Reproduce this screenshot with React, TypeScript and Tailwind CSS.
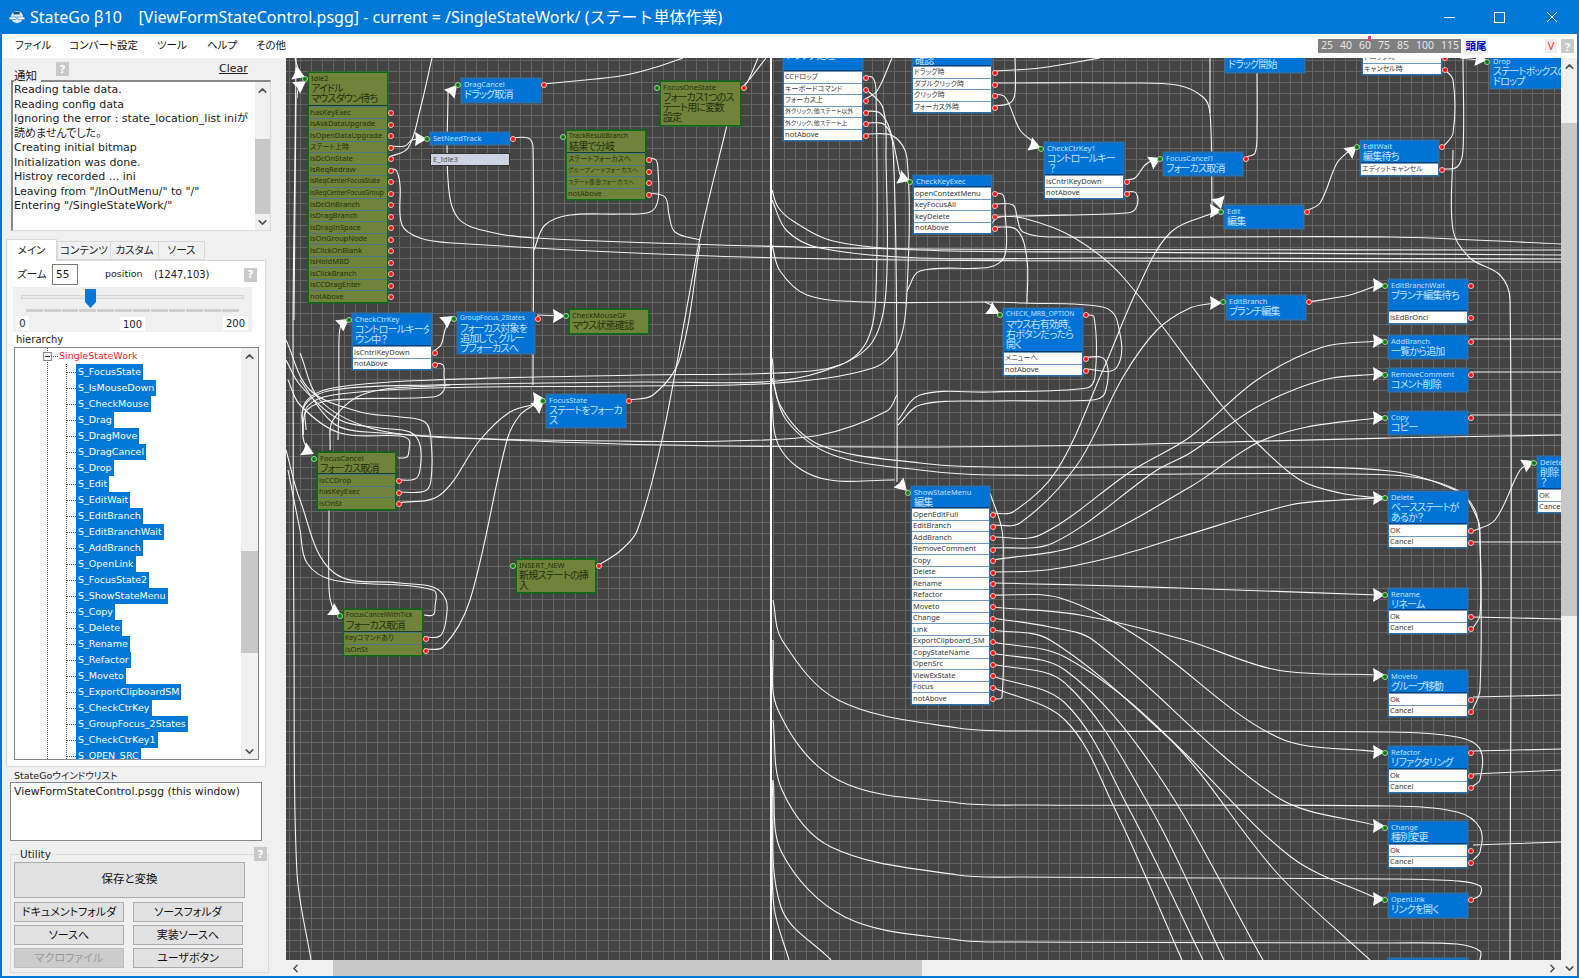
import { ChevronUp, ChevronDown, ChevronLeft, ChevronRight } from "lucide-react";

type NodeData = {
  x: number; y: number; w: number; h: number; c: "g" | "b";
  name: string; title?: string; rows?: string[]; out?: boolean;
};

const RH = 11.5;

const nodes: NodeData[] = [
  { x: 308, y: 72, w: 79, h: 34, c: "g", name: "Idle2", title: "アイドル\nマウスダウン待ち", rows: ["hasKeyExec", "isAskDataUpgrade", "isOpenDataUpgrade", "ステート上時", "isDcOnState", "isReqRedraw", "isReqCenterFocusState", "isReqCenterFocusGroup", "isDcOnBranch", "isDragBranch", "isDragInSpace", "isOnGroupNode", "isClickOnBlank", "isHoldMBD", "isClickBranch", "isCCDragEnter", "notAbove"] },
  { x: 660, y: 81, w: 80, h: 44, c: "g", name: "FocusOneState", title: "フォーカス1つのス\nテート用に変数\n設定", out: true },
  { x: 566, y: 130, w: 79, h: 23, c: "g", name: "TrackResultBranch", title: "結果で分岐", rows: ["ステートフォーカスへ", "グループノードフォーカスへ", "ステート集合フォーカスへ", "notAbove"] },
  { x: 569, y: 309, w: 79, h: 24, c: "g", name: "CheckMouseGF", title: "マウス状態確認" },
  { x: 317, y: 452, w: 78, h: 22, c: "g", name: "FocusCancel", title: "フォーカス取消", rows: ["isCCDrop", "hasKeyExec", "isOnSt"] },
  { x: 343, y: 609, w: 79, h: 23, c: "g", name: "FocusCancelWithTick", title: "フォーカス取消", rows: ["Keyコマンドあり", "isOnSt"] },
  { x: 516, y: 559, w: 79, h: 33, c: "g", name: "INSERT_NEW", title: "新規ステートの挿\n入", out: true },
  { x: 461, y: 78, w: 79, h: 24, c: "b", name: "DragCancel", title: "ドラッグ取消", out: true },
  { x: 430, y: 132, w: 79, h: 12, c: "b", name: "SetNeedTrack", out: true },
  { x: 352, y: 313, w: 79, h: 33, c: "b", name: "CheckCtrKey", title: "コントロールキーダ\nウン中？", rows: ["isCntrlKeyDown", "notAbove"] },
  { x: 457, y: 312, w: 77, h: 41, c: "b", name: "GroupFocus_2States", title: "フォーカス対象を\n追加して、グルー\nプフォーカスへ", out: true },
  { x: 546, y: 394, w: 79, h: 33, c: "b", name: "FocusState", title: "ステートをフォーカ\nス", out: true },
  { x: 783, y: 29, w: 79, h: 42, c: "b", name: "IsMouseDown", title: "マウスボタン\nドラッグ処理", rows: ["CCドロップ", "キーボードコマンド", "フォーカス上", "外クリック、他ステート以外", "外クリック、他ステート上", "notAbove"] },
  { x: 912, y: 34, w: 79, h: 32, c: "b", name: "CheckMouse", title: "マウスを\n確認", rows: ["ドラッグ時", "ダブルクリック時", "クリック時", "フォーカス外時"] },
  { x: 913, y: 175, w: 78, h: 12, c: "b", name: "CheckKeyExec", rows: ["openContextMenu", "keyFocusAll", "keyDelete", "notAbove"] },
  { x: 1044, y: 142, w: 79, h: 33, c: "b", name: "CheckCtrKey1", title: "コントロールキー\n ？", rows: ["isCntrlKeyDown", "notAbove"] },
  { x: 1163, y: 152, w: 79, h: 23, c: "b", name: "FocusCancel1", title: "フォーカス取消", out: true },
  { x: 1224, y: 205, w: 79, h: 23, c: "b", name: "Edit", title: "編集", out: true },
  { x: 1225, y: 48, w: 79, h: 24, c: "b", name: "Drag", title: "ドラッグ開始" },
  { x: 1360, y: 140, w: 78, h: 23, c: "b", name: "EditWait", title: "編集待ち", rows: ["エディットキャンセル"], out: true },
  { x: 1362, y: 46, w: 79, h: 5, c: "b", name: "", rows: ["ドロップ時", "キャンセル時"] },
  { x: 1490, y: 55, w: 80, h: 33, c: "b", name: "Drop", title: "ステートボックスの\nドロップ" },
  { x: 1226, y: 295, w: 79, h: 24, c: "b", name: "EditBranch", title: "ブランチ編集", out: true },
  { x: 1388, y: 279, w: 79, h: 32, c: "b", name: "EditBranchWait", title: "ブランチ編集待ち", rows: ["isEdBrOncl"], out: true },
  { x: 1388, y: 335, w: 79, h: 23, c: "b", name: "AddBranch", title: "一覧から追加", out: true },
  { x: 1388, y: 368, w: 79, h: 23, c: "b", name: "RemoveComment", title: "コメント削除", out: true },
  { x: 1388, y: 411, w: 79, h: 23, c: "b", name: "Copy", title: "コピー", out: true },
  { x: 1003, y: 308, w: 79, h: 44, c: "b", name: "CHECK_MRB_OPTION", title: "マウス右有効時、\n右ボタンだったら\n開く", rows: ["メニューへ", "notAbove"], out: true },
  { x: 911, y: 486, w: 78, h: 22, c: "b", name: "ShowStateMenu", title: "編集", rows: ["OpenEditFull", "EditBranch", "AddBranch", "RemoveComment", "Copy", "Delete", "Rename", "Refactor", "Moveto", "Change", "Link", "ExportClipboard_SM", "CopyStateName", "OpenSrc", "ViewExState", "Focus", "notAbove"] },
  { x: 1388, y: 491, w: 79, h: 33, c: "b", name: "Delete", title: "ベースステートが\nあるか？", rows: ["OK", "Cancel"] },
  { x: 1388, y: 588, w: 79, h: 22, c: "b", name: "Rename", title: "リネーム", rows: ["Ok", "Cancel"] },
  { x: 1388, y: 670, w: 79, h: 23, c: "b", name: "Moveto", title: "グループ移動", rows: ["Ok", "Cancel"] },
  { x: 1388, y: 746, w: 79, h: 23, c: "b", name: "Refactor", title: "リファクタリング", rows: ["Ok", "Cancel"], out: true },
  { x: 1388, y: 821, w: 79, h: 23, c: "b", name: "Change", title: "種別変更", rows: ["Ok", "Cancel"] },
  { x: 1388, y: 893, w: 79, h: 24, c: "b", name: "OpenLink", title: "リンクを開く", out: true },
  { x: 1388, y: 958, w: 79, h: 24, c: "b", name: "Focus", title: "フォーカス" },
  { x: 1537, y: 456, w: 79, h: 33, c: "b", name: "Delete2", title: "削除\n？", rows: ["OK", "Cancel"] },
];

const wires: number[][] = [
  [296, 58, 295, 155, 293, 325, 294, 640, 297, 873, 311, 960],
  [295, 58, 298, 68, 303, 76],
  [297, 98, 298, 90, 304, 82],
  [296, 98, 295, 200, 294, 320],
  [389, 146, 405, 146, 412, 140, 425, 139],
  [389, 157, 408, 148, 420, 110, 432, 58],
  [389, 169, 396, 170, 400, 185, 402, 225, 420, 238, 452, 243, 685, 255, 903, 260, 1561, 262],
  [448, 92, 448, 180, 458, 218, 490, 232, 535, 238, 685, 244, 920, 249, 1561, 250],
  [544, 84, 620, 76, 653, 68, 683, 58],
  [512, 138, 528, 138, 533, 146, 533, 385],
  [649, 158, 656, 160, 658, 170, 658, 200, 650, 212, 620, 214, 570, 215, 545, 225, 534, 250],
  [649, 193, 665, 197, 669, 215, 675, 232, 700, 240],
  [537, 315, 560, 316],
  [347, 320, 341, 325, 339, 340, 339, 400, 338, 440],
  [434, 351, 441, 345, 445, 330, 450, 318],
  [434, 363, 443, 365, 444, 375, 444, 390, 433, 397, 333, 400, 307, 410, 303, 430, 304, 442, 311, 453],
  [303, 435, 305, 403, 333, 388, 433, 380, 640, 375, 777, 373, 840, 365, 867, 341, 876, 291, 876, 91, 873, 78, 865, 76],
  [303, 435, 305, 405, 333, 390, 433, 385, 640, 382, 777, 381, 840, 365, 873, 341, 886, 291, 886, 158, 883, 108, 865, 88],
  [306, 430, 307, 407, 333, 395, 433, 388, 620, 386, 777, 383, 873, 368, 898, 345, 907, 291, 907, 158, 893, 136, 865, 134],
  [994, 193, 1003, 195, 1005, 210, 1005, 255, 990, 267, 920, 271, 907, 291],
  [330, 450, 333, 420, 367, 393, 450, 385],
  [300, 353, 320, 400, 367, 427, 433, 437, 620, 441, 727, 441, 820, 435, 887, 411, 897, 395],
  [300, 380, 333, 423, 367, 432, 620, 444, 900, 447, 1100, 445, 1390, 438, 1561, 435],
  [398, 458, 407, 457, 409, 450, 409, 440, 400, 436, 340, 433, 300, 405, 288, 380],
  [398, 480, 415, 479, 420, 470, 420, 445, 410, 432, 380, 428, 340, 420, 300, 385, 286, 360],
  [398, 492, 425, 491, 431, 480, 431, 440, 425, 422, 400, 417, 360, 412, 310, 390, 286, 340],
  [398, 503, 440, 495, 480, 440, 510, 412, 540, 403],
  [329, 510, 329, 590, 332, 606, 337, 612],
  [424, 615, 433, 615, 435, 608, 433, 590, 333, 580, 307, 563, 300, 530, 288, 470],
  [424, 637, 440, 636, 446, 620, 446, 600, 433, 587, 400, 583, 333, 572, 300, 500, 286, 450],
  [424, 649, 443, 647, 470, 600, 507, 440, 520, 415, 537, 403],
  [599, 565, 620, 551, 637, 531, 663, 435, 700, 238, 727, 125],
  [627, 400, 653, 395, 680, 358, 700, 245],
  [743, 87, 748, 81, 758, 58],
  [743, 87, 753, 75, 766, 58],
  [772, 190, 778, 207, 793, 221, 833, 241, 920, 250, 1100, 252, 1561, 255],
  [772, 200, 787, 231, 820, 248, 920, 258, 1100, 258, 1561, 259],
  [772, 245, 780, 271, 807, 295, 867, 302, 990, 302, 1023, 303, 1103, 307, 1117, 320, 1117, 367, 1084, 369],
  [985, 302, 993, 306, 999, 313],
  [772, 358, 780, 405, 820, 445, 920, 463, 990, 467, 1223, 467, 1390, 471, 1457, 491, 1475, 510, 1480, 540, 1480, 690, 1473, 709],
  [772, 378, 787, 421, 833, 455, 920, 470, 990, 475, 1390, 475, 1457, 490, 1478, 520, 1480, 540, 1480, 615, 1473, 628],
  [771, 391, 780, 448, 820, 478, 895, 480],
  [865, 99, 877, 91, 892, 58],
  [865, 111, 880, 113, 890, 130, 900, 175],
  [865, 123, 885, 125, 893, 148, 897, 358, 897, 482],
  [994, 204, 1013, 205, 1017, 217, 1023, 232, 1057, 237, 1390, 237, 1561, 244],
  [994, 216, 1023, 218, 1073, 237, 1123, 277, 1223, 407, 1257, 443, 1300, 480, 1340, 493, 1378, 498],
  [994, 227, 1017, 230, 1027, 260, 1027, 303],
  [1125, 192, 1136, 193, 1136, 208, 1127, 213, 1023, 216, 997, 218, 990, 227],
  [1125, 180, 1135, 178, 1145, 165, 1155, 159],
  [1246, 157, 1255, 153, 1257, 127, 1257, 72],
  [993, 83, 1123, 83, 1177, 85, 1203, 97, 1210, 113, 1212, 205],
  [1210, 58, 1210, 113],
  [993, 71, 1040, 68, 1100, 58],
  [993, 94, 1005, 97, 1020, 130, 1035, 143],
  [993, 106, 1010, 103, 1015, 93, 1015, 58],
  [1306, 211, 1320, 203, 1337, 163, 1350, 150],
  [992, 513, 1013, 512, 1057, 470, 1103, 370, 1137, 290, 1170, 233, 1215, 212],
  [992, 525, 1020, 523, 1077, 465, 1123, 377, 1157, 330, 1190, 308, 1215, 303],
  [1308, 302, 1350, 295, 1378, 285],
  [992, 537, 1040, 535, 1133, 470, 1190, 437, 1257, 380, 1323, 347, 1377, 341],
  [992, 548, 1053, 543, 1157, 470, 1190, 453, 1257, 407, 1323, 380, 1377, 374],
  [992, 560, 1080, 545, 1190, 487, 1257, 443, 1307, 427, 1377, 418],
  [992, 572, 1047, 570, 1113, 557, 1180, 537, 1290, 505, 1340, 500, 1378, 498],
  [992, 583, 1080, 585, 1180, 588, 1378, 595],
  [992, 607, 1080, 615, 1185, 640, 1277, 670, 1378, 675],
  [992, 595, 1060, 598, 1143, 640, 1277, 737, 1378, 752],
  [992, 618, 1050, 627, 1093, 640, 1277, 797, 1378, 826],
  [992, 630, 1050, 640, 1171, 740, 1291, 857, 1378, 899],
  [992, 642, 1065, 657, 1171, 740, 1277, 873, 1370, 960],
  [992, 653, 1065, 670, 1157, 773, 1263, 960],
  [992, 664, 1065, 683, 1150, 807, 1224, 960],
  [992, 676, 1065, 703, 1128, 807, 1203, 960],
  [992, 687, 1065, 720, 1114, 807, 1182, 960],
  [992, 699, 1002, 697, 1003, 570, 1002, 530, 990, 493],
  [1084, 315, 1094, 317, 1095, 377, 1087, 388, 990, 392, 920, 395, 898, 420],
  [1084, 357, 1105, 360, 1105, 393, 1093, 400, 990, 401, 920, 405, 898, 425],
  [773, 600, 782, 640, 838, 700, 958, 728, 1036, 731, 1390, 732, 1457, 737, 1480, 749, 1480, 780, 1473, 786],
  [773, 640, 778, 710, 838, 780, 958, 803, 1036, 805, 1390, 806, 1457, 812, 1480, 828, 1480, 852, 1473, 860],
  [773, 720, 782, 790, 831, 847, 958, 875, 1022, 877, 1390, 879, 1457, 881, 1480, 886, 1480, 895, 1473, 899],
  [773, 780, 782, 853, 845, 917, 958, 940, 1022, 942, 1390, 943, 1457, 944, 1480, 951, 1480, 960],
  [772, 820, 774, 907, 789, 960],
  [772, 780, 781, 907, 831, 960],
  [1473, 531, 1495, 520, 1520, 470, 1530, 463],
  [1473, 542, 1561, 542],
  [1473, 617, 1561, 619],
  [1473, 697, 1561, 695],
  [1473, 751, 1561, 749],
  [1473, 774, 1561, 770],
  [1473, 845, 1561, 842],
  [1443, 68, 1453, 80, 1453, 133, 1443, 147],
  [1441, 169, 1457, 167, 1463, 150, 1463, 58],
  [1460, 58, 1470, 59, 1480, 60],
  [1453, 150, 1453, 230, 1470, 258, 1500, 275, 1510, 300, 1510, 960],
  [1470, 339, 1561, 339],
  [1470, 372, 1561, 372],
  [1470, 415, 1561, 415],
];

const arrows: [number, number, number][] = [
  [305, 77, 20], [306, 81, -35], [457, 85, -50], [427, 139, 0], [349, 319, -35], [453, 316, -35],
  [565, 316, 0], [545, 399, 0], [544, 401, -40], [314, 454, 25], [341, 615, 30], [910, 181, 20],
  [1041, 148, 20], [1161, 158, -25], [1222, 211, 0], [1221, 209, 75], [1357, 146, -40], [1222, 303, 0],
  [1487, 60, 5], [999, 314, 30], [907, 491, 45], [1385, 285, 0], [1385, 341, 0], [1385, 374, 0],
  [1385, 418, 0], [1385, 498, 0], [1385, 595, 0], [1385, 675, 0], [1385, 752, 0], [1385, 826, 0],
  [1385, 899, 0], [1534, 461, -25],
];

// smooth line through the sampled points
function spline(p: number[]) {
  const pts: [number, number][] = [];
  for (let i = 0; i < p.length; i += 2) pts.push([p[i], p[i + 1]]);
  let d = `M${pts[0][0]} ${pts[0][1]}`;
  for (let i = 0; i < pts.length - 1; i++) {
    const a = pts[Math.max(i - 1, 0)];
    const b = pts[i];
    const c = pts[i + 1];
    const e = pts[Math.min(i + 2, pts.length - 1)];
    const lenBC = Math.hypot(c[0] - b[0], c[1] - b[1]);
    const k1 = lenBC / (3 * Math.max(1, Math.hypot(c[0] - a[0], c[1] - a[1])));
    const k2 = lenBC / (3 * Math.max(1, Math.hypot(e[0] - b[0], e[1] - b[1])));
    d += `C${b[0] + (c[0] - a[0]) * k1} ${b[1] + (c[1] - a[1]) * k1} ${c[0] - (e[0] - b[0]) * k2} ${c[1] - (e[1] - b[1]) * k2} ${c[0]} ${c[1]}`;
  }
  return d;
}

function Dot({ out }: { out?: boolean }) {
  if (out)
    return <span className="absolute right-[-7px] top-[3px] w-[6px] h-[6px] rounded-full bg-[#ff0f0f] border border-[#f7c0c0]" />;
  return <span className="absolute left-[-7px] top-[3px] w-[6px] h-[6px] rounded-full bg-[#0a7a0a] border border-[#a8d0a8]" />;
}

function rowSize(r: string) {
  const jp = /[ぁ-ンー一-龠]/.test(r);
  if (jp) return r.length >= 12 ? "text-[6px]" : "text-[7px]";
  return r.length >= 20 ? "text-[6.5px]" : "text-[7.5px]";
}

function StateNode({ n }: { n: NodeData }) {
  const green = n.c === "g";
  return (
    <div
      className={`absolute flex flex-col border outline outline-1 ${green ? "border-[#0e6a14] outline-[#0e6a14]/50 bg-[#6f833b]" : "border-[#2f6fa6] outline-[#2f6fa6]/50 bg-[#0073d6]"}`}
      style={{ left: n.x - 286, top: n.y - 58, width: n.w + 1 }}
    >
      <div
        className={`relative px-[2px] ${green ? "text-[#24300c]" : "text-[#c4e2ff]"} ${n.rows ? (green ? "border-b border-[#193f2a]" : "border-b border-[#123f70]") : ""}`}
        style={{ height: n.h - 1 }}
      >
        <Dot />
        {n.out && !n.rows && <Dot out />}
        <div className="overflow-hidden h-full">
          {n.name && <div className={`leading-[10px] whitespace-nowrap ${n.name.length >= 16 ? "text-[6.8px]" : "text-[7.5px]"}`}>{n.name}</div>}
          {n.title && <div className="text-[10px] leading-[10px] tracking-[-0.8px] whitespace-pre">{n.title}</div>}
        </div>
      </div>
      {n.out && n.rows && <span className="absolute right-[-7px] top-[3px] w-[6px] h-[6px] rounded-full bg-[#ff0f0f] border border-[#f7c0c0]" />}
      {n.rows?.map((r, i) => (
        <div
          key={i}
          className={`relative px-[1px] flex items-center whitespace-nowrap ${green ? "border-t border-[#4f7784] text-[#26320d]" : "border-t border-[#6f97bf] bg-white text-[#3a3a3a]"} ${rowSize(r)}`}
          style={{ height: RH }}
        >
          {r}
          <Dot out />
        </div>
      ))}
    </div>
  );
}

function Help({ className = "" }: { className?: string }) {
  return (
    <span className={`flex items-center justify-center w-[13px] h-[14px] bg-[#c9c9c9] text-white text-[11px] font-bold leading-none ${className}`}>?</span>
  );
}

function VScrollButton({ up }: { up?: boolean }) {
  return (
    <div className="h-[16px] flex items-center justify-center text-[#555]">
      {up ? <ChevronUp size={13} strokeWidth={3} /> : <ChevronDown size={13} strokeWidth={3} />}
    </div>
  );
}

const logLines = [
  "Reading table data.",
  "Reading config data",
  "Ignoring the error : state_location_list iniが",
  "読めませんでした。",
  "Creating initial bitmap",
  "Initialization was done.",
  "Histroy recorded ... ini",
  'Leaving from "/InOutMenu/" to "/"',
  'Entering "/SingleStateWork/"',
];

const treeItems = ["S_FocusState", "S_IsMouseDown", "S_CheckMouse", "S_Drag", "S_DragMove", "S_DragCancel", "S_Drop", "S_Edit", "S_EditWait", "S_EditBranch", "S_EditBranchWait", "S_AddBranch", "S_OpenLink", "S_FocusState2", "S_ShowStateMenu", "S_Copy", "S_Delete", "S_Rename", "S_Refactor", "S_Moveto", "S_ExportClipboardSM", "S_CheckCtrKey", "S_GroupFocus_2States", "S_CheckCtrKey1", "S_OPEN_SRC"];

function Btn({ label, disabled }: { label: string; disabled?: boolean }) {
  return (
    <button className={`h-[20px] w-[110px] border text-[11px] leading-none flex items-center justify-center ${disabled ? "bg-[#cccccc] border-[#bfbfbf] text-[#9a9a9a]" : "bg-[#e1e1e1] border-[#adadad] text-[#111]"}`}>{label}</button>
  );
}

const uiFont = "font-['DejaVu_Sans','Noto_Sans_CJK_JP',sans-serif]";

function LeftPanel() {
  return (
    <div className={`w-[284px] shrink-0 bg-[#f0f0f0] flex flex-col text-[11px] text-[#1c1c1c] ${uiFont}`}>
      <div className="relative h-[22px] ml-[12px] z-10">
        <span className="absolute left-0 top-[11px] text-[11.5px] leading-[14px] bg-[#f0f0f0] pr-[4px]">通知</span>
        <Help className="absolute left-[42px] top-[4px]" />
        <span className="absolute left-[205px] top-[4px] underline text-[11px] leading-[14px]">Clear</span>
      </div>
      <div className="ml-[9px] w-[260px] h-[151px] flex bg-white border-t-2 border-l-2 border-t-[#8a8a8a] border-l-[#8a8a8a] border-r border-b border-r-[#dcdcdc] border-b-[#dcdcdc]">
        <div className="flex-1 pt-[1px] pl-[1px] leading-[14.5px] overflow-hidden">
          {logLines.map((l, i) => <div key={i} className="whitespace-nowrap text-[11px]">{l}</div>)}
        </div>
        <div className="w-[15px] bg-[#f0f0f0] flex flex-col">
          <VScrollButton up />
          <div className="h-[41px]" />
          <div className="h-[75px] bg-[#c8c8c8]" />
          <div className="flex-1" />
          <VScrollButton />
        </div>
      </div>

      <div className="mt-[9px] ml-[4px] flex items-end h-[20px] relative z-10 whitespace-nowrap text-[10.5px]">
        <div className="w-[51px] h-[22px] bg-white border border-b-0 border-[#d9d9d9] flex items-center justify-center -mb-px">メイン</div>
        <div className="w-[54px] h-[19px] bg-[#f0f0f0] border border-[#d9d9d9] flex items-center justify-center">コンテンツ</div>
        <div className="w-[48px] h-[19px] bg-[#f0f0f0] border border-l-0 border-[#d9d9d9] flex items-center justify-center">カスタム</div>
        <div className="w-[46px] h-[19px] bg-[#f0f0f0] border border-l-0 border-[#d9d9d9] flex items-center justify-center">ソース</div>
      </div>
      <div className="ml-[4px] w-[260px] h-[507px] border border-[#d9d9d9] bg-white flex flex-col">
        <div className="h-[26px] flex items-center pt-[1px] shrink-0 whitespace-nowrap">
          <span className="ml-[10px] w-[35px] text-[10.5px]">ズーム</span>
          <span className="w-[26px] h-[21px] border border-[#7a7a7a] pl-[3px] flex items-center text-[10.5px]">55</span>
          <span className="ml-[27px] w-[47px] text-[9.5px]">position</span>
          <span className="ml-[2px] w-[68px] text-[10px]">(1247,103)</span>
          <Help className="ml-[22px]" />
        </div>
        <div className="relative ml-[6px] w-[239px] h-[45px] bg-[#f0f0f0] shrink-0">
          <div className="absolute left-[8px] top-[8px] w-[223px] h-[4px] bg-[#e7eae7] border border-[#d6d6d6]" />
          <svg className="absolute left-[72px] top-[2px]" width="11" height="19" viewBox="0 0 11 19"><path d="M0 0H11V13L5.5 19L0 13Z" fill="#0078d7" /></svg>
          <div className="absolute left-[13px] top-[22px] w-[213px] flex gap-[1px]">
            {Array.from({ length: 12 }).map((_, i) => <span key={i} className="flex-1 h-[3px] bg-[#cfcfcf]" />)}
          </div>
          <span className="absolute left-[3px] top-[29px] w-[13px] h-[14px] bg-white flex items-center justify-center text-[10px]">0</span>
          <span className="absolute left-[107px] top-[30px] w-[25px] h-[14px] bg-white flex items-center justify-center text-[10px]">100</span>
          <span className="absolute left-[210px] top-[29px] w-[25px] h-[14px] bg-white flex items-center justify-center text-[10px]">200</span>
        </div>
        <div className="h-[15px] pl-[9px] leading-[15px] text-[10px] shrink-0">hierarchy</div>
        <div className="ml-[7px] w-[245px] h-[413px] border border-[#828790] flex relative overflow-hidden">
          <span className="absolute left-[32px] top-0 bottom-0 border-l border-dotted border-[#555]" />
          <span className="absolute left-[51px] top-[16px] bottom-0 border-l border-dotted border-[#555]" />
          <div className="flex-1 leading-[16px] relative">
            <div className="h-[16px] flex items-center ml-[28px]">
              <span className="w-[9px] h-[9px] border border-[#8a8a8a] bg-[#f4f4f4] flex items-center justify-center"><span className="w-[5px] h-[1px] bg-[#333]" /></span>
              <span className="ml-[1px] w-[5px] border-t border-dotted border-[#555]" />
              <span className="ml-[1px] text-[#f5222d] text-[9.5px]">SingleStateWork</span>
            </div>
            {treeItems.map((t) => (
              <div key={t} className="h-[16px] flex items-center ml-[52px]">
                <span className="w-[9px] border-t border-dotted border-[#555]" />
                <span className="bg-[#0078d7] text-white px-[2px] text-[9.5px] whitespace-nowrap leading-[16px]">{t}</span>
              </div>
            ))}
          </div>
          <div className="w-[17px] bg-[#f0f0f0] flex flex-col shrink-0">
            <VScrollButton up />
            <div className="h-[187px]" />
            <div className="h-[102px] bg-[#c8c8c8]" />
            <div className="flex-1" />
            <VScrollButton />
          </div>
        </div>
      </div>

      <div className="mt-[2px] ml-[12px] text-[9.5px] leading-[13px] h-[13px] whitespace-nowrap">StateGoウインドウリスト</div>
      <div className="ml-[8px] w-[252px] h-[59px] bg-white border border-[#828790] pl-[3px] text-[10.8px] leading-[17px]">ViewFormStateControl.psgg (this window)</div>

      <div className="relative mt-[13px] ml-[8px] w-[259px] h-[119px] border border-[#dcdcdc] px-[3px] pt-[7px] flex flex-col gap-[4px]">
        <span className="absolute left-[8px] top-[-8px] bg-[#f0f0f0] px-[1px] leading-[14px] text-[10.5px]">Utility</span>
        <Help className="absolute left-[243px] top-[-8px]" />
        <button className="w-[231px] h-[36px] bg-[#e1e1e1] border border-[#adadad] text-[11.5px] text-[#111] flex items-center justify-center">保存と変換</button>
        <div className="grid grid-cols-[110px_110px] gap-x-[9px] gap-y-[3px]">
          <Btn label="ドキュメントフォルダ" />
          <Btn label="ソースフォルダ" />
          <Btn label="ソースへ" />
          <Btn label="実装ソースへ" />
          <Btn label="マクロファイル" disabled />
          <Btn label="ユーザボタン" />
        </div>
      </div>
    </div>
  );
}

function Canvas() {
  return (
    <div className="relative flex-1 overflow-hidden bg-[#434343] bg-[linear-gradient(#646464_1px,transparent_1px),linear-gradient(90deg,#646464_1px,transparent_1px)] bg-[size:11px_11px] bg-[position:3px_2px] font-['Noto_Sans','Noto_Sans_CJK_JP',sans-serif]">
      <svg className="absolute left-0 top-0" width="1275" height="902" viewBox="286 58 1275 902" fill="none">
        <path d="M771 58V960" stroke="#fff" strokeWidth="2" />
        {wires.map((w, i) => <path key={i} d={spline(w)} stroke="#f4f4f4" strokeWidth="1.1" />)}
        {arrows.map(([x, y, a], i) => (
          <path key={i} d="M0 0L-12 -7L-11 0L-12 7Z" fill="#fff" transform={`translate(${x} ${y}) rotate(${a})`} />
        ))}
      </svg>
      {nodes.map((n) => <StateNode key={n.name + n.x} n={n} />)}
      <div className="absolute left-[144px] top-[95px] w-[80px] h-[13px] bg-[#cdd3e3] border border-[#333] text-[7.5px] leading-[11px] px-[2px] text-[#555]">E_Idle3</div>
    </div>
  );
}

export default function App() {
  return (
    <div className="w-[1579px] h-[978px] flex flex-col overflow-hidden border-x-2 border-b-2 border-[#0078d7] bg-[#f0f0f0] [font-feature-settings:'palt'] font-['Noto_Sans','Noto_Sans_CJK_JP',sans-serif]">
      <div className="h-[34px] shrink-0 bg-[#0078d7] text-white flex items-center">
        <svg className="ml-[7px]" width="16" height="14" viewBox="0 0 18 16">
          <circle cx="9" cy="8" r="7" fill="#d6e6f5" />
          <rect x="0" y="8" width="8" height="3" fill="#f4f8fc" stroke="#005a9e" strokeWidth="0.5" />
          <rect x="10" y="8" width="8" height="3" fill="#f4f8fc" stroke="#005a9e" strokeWidth="0.5" />
          <rect x="5" y="2" width="7" height="3" fill="#1c4f80" />
        </svg>
        <span className="ml-[5px] text-[16px] whitespace-pre [font-feature-settings:normal]">StateGo β10    [ViewFormStateControl.psgg] - current = /SingleStateWork/ (ステート単体作業)</span>
        <div className="ml-auto flex items-center">
          <svg className="mr-[39px]" width="11" height="11" viewBox="0 0 11 11"><path d="M0 5.5H11" stroke="#fff" /></svg>
          <svg className="mr-[41px]" width="11" height="11" viewBox="0 0 11 11"><rect x="0.5" y="0.5" width="10" height="10" fill="none" stroke="#fff" /></svg>
          <svg className="mr-[19px]" width="12" height="12" viewBox="0 0 12 12"><path d="M1 1L11 11M11 1L1 11" stroke="#fff" /></svg>
        </div>
      </div>

      <div className={`h-[24px] shrink-0 bg-white flex items-center text-[10.5px] text-[#111] relative ${uiFont}`}>
        <span className="ml-[13px]">ファイル</span>
        <span className="ml-[18px]">コンバート設定</span>
        <span className="ml-[19px]">ツール</span>
        <span className="ml-[20px]">ヘルプ</span>
        <span className="ml-[19px]">その他</span>
        <span className="absolute left-[1366px] top-[2px] w-[3px] h-[5px] bg-[#e0407a]" />
        <div className="ml-auto flex items-center font-['Noto_Sans',sans-serif]">
          <span className="w-[143px] h-[14px] bg-[#808080] text-[#e6e6e6] text-[10.5px] flex items-center gap-[7px] pl-[3px] whitespace-nowrap">
            <span>25</span><span>40</span><span>60</span><span>75</span><span>85</span><span>100</span><span>115</span>
          </span>
          <span className="ml-[3px] w-[24px] bg-[#f0f0f0] text-[#0000c0] font-bold text-[10.5px] text-center font-['Noto_Sans_CJK_JP',sans-serif]">頭尾</span>
          <span className="ml-[57px] w-[12px] h-[14px] bg-[#eeeeee] text-[#f03a3a] text-[11px] flex items-center justify-center">V</span>
          <Help className="ml-[4px] mr-[3px]" />
        </div>
      </div>

      <div className="flex-1 flex min-h-0">
        <LeftPanel />
        <div className="flex-1 flex flex-col min-w-0">
          <Canvas />
          <div className="h-[16px] shrink-0 bg-[#f0f0f0] flex items-center">
            <div className="w-[47px] pl-[3px] text-[#555]"><ChevronLeft size={13} strokeWidth={3} /></div>
            <div className="w-[589px] h-full bg-[#c8c8c8]" />
            <div className="ml-auto pr-[2px] text-[#555]"><ChevronRight size={13} strokeWidth={3} /></div>
          </div>
        </div>
        <div className="w-[16px] shrink-0 bg-[#f0f0f0] flex flex-col">
          <VScrollButton up />
          <div className="h-[49px]" />
          <div className="h-[493px] bg-[#c8c8c8]" />
          <div className="flex-1" />
          <VScrollButton />
        </div>
      </div>
    </div>
  );
}
